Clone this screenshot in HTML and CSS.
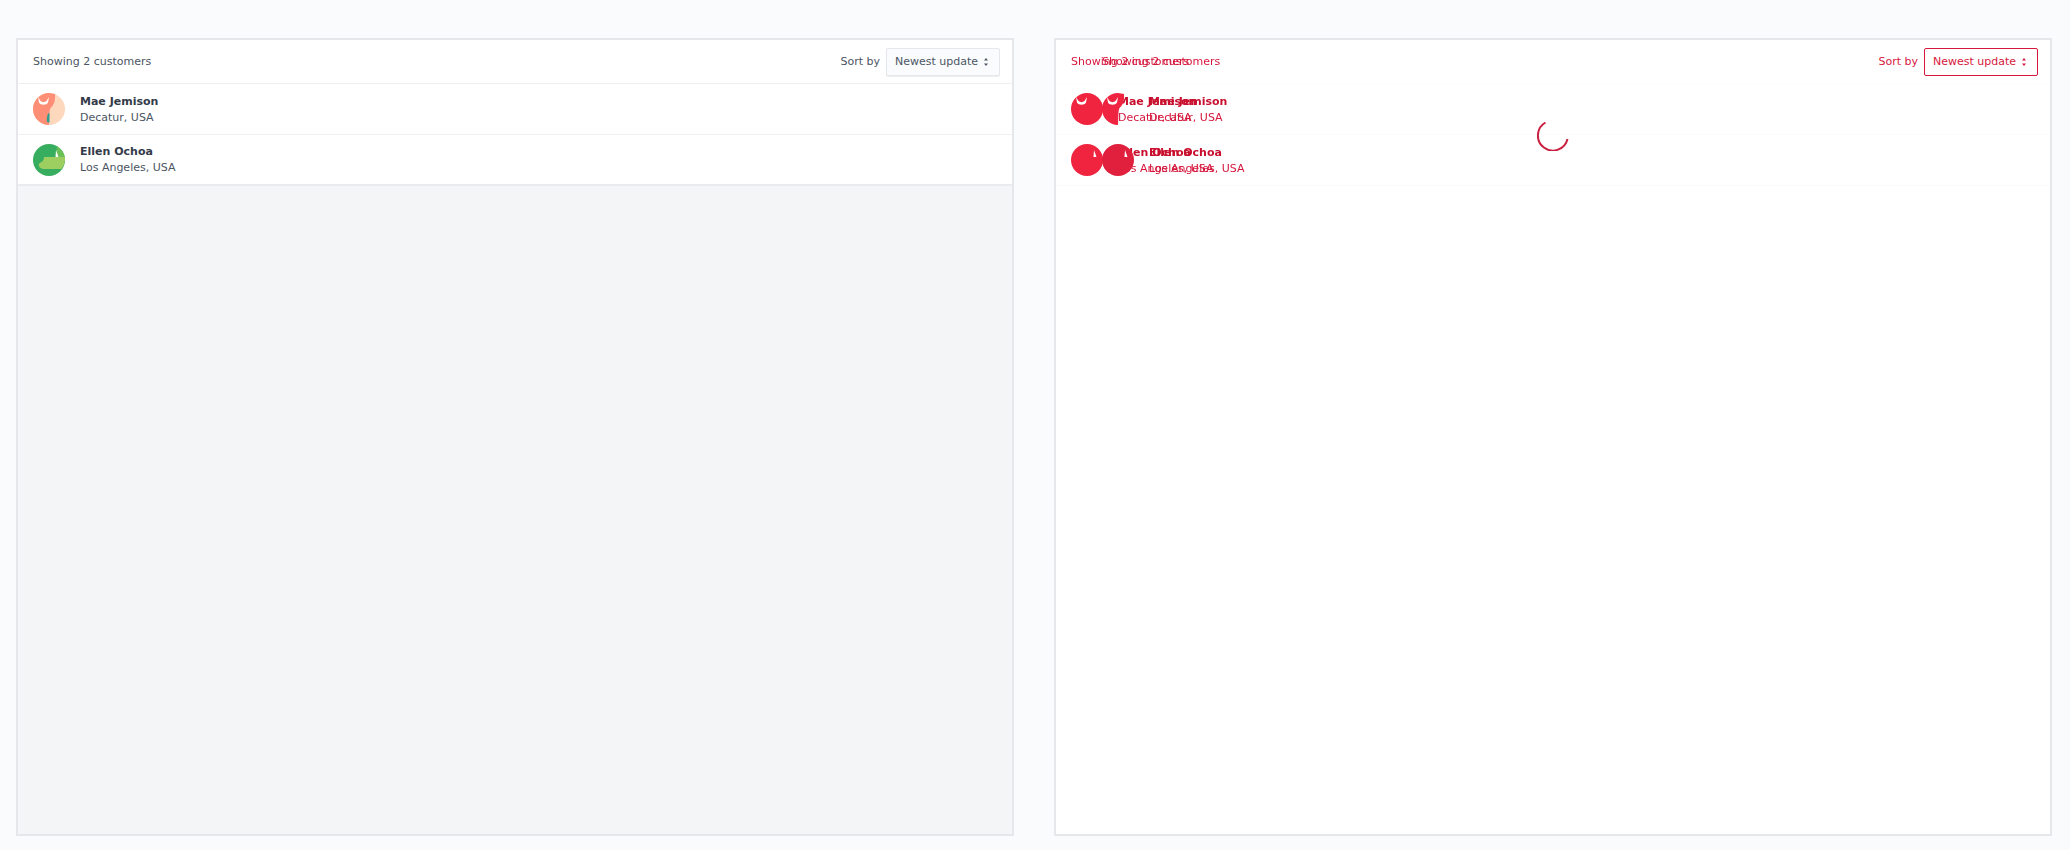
FILE: index.html
```html
<!DOCTYPE html>
<html lang="en">
<head>
<meta charset="utf-8">
<title>Customers</title>
<link rel="stylesheet" href="styles.css">
</head>
<body>
<main class="split">
  <section class="panel panel-gray">
    <header class="bar">
      <span class="count">Showing 2 customers</span>
      <div class="sort">
        <span class="sort-label">Sort by</span>
        <button class="select">Newest update
          <svg class="updown" viewBox="0 0 6 10"><path d="M3 1 5 3.500H1zM3 9 1 6.500H5z"/></svg>
        </button>
      </div>
    </header>
    <ul class="list">
      <li class="row">
        <svg class="avatar" viewBox="0 0 32 32"><circle cx="16" cy="16" r="16" fill="#fdd8bd"/><path d="M16 32A16 16 0 0 1 16 0L22 1C22.500 8 21 12 17.500 15C16 18 16.500 25 16 32Z" fill="#ff8e76"/><path d="M16.500 19.500C14 21 13.500 25 14 29L16.500 29.500Z" fill="#2f9e8f"/><path d="M5 4 7.500 8C9 9.500 12 9.500 13.500 8L16 4 15 9.500C13.500 12.500 7.500 12.500 6 9.500Z" fill="#fff"/></svg>
        <div class="who"><strong class="name">Mae Jemison</strong><span class="place">Decatur, USA</span></div>
      </li>
      <li class="row">
        <svg class="avatar" viewBox="0 0 32 32"><circle cx="16" cy="16" r="16" fill="#37ad5f"/><path d="M24 2.200A16 16 0 0 1 32 14H23Z" fill="#6bbf57"/><path d="M11 13H31.900A16 16 0 0 1 28.500 25H12C8 25 5 23 6 20C7 18 11 18 11 13Z" fill="#9ccf60"/><path d="M22.500 13 23 6 25.500 13Z" fill="#fff"/></svg>
        <div class="who"><strong class="name">Ellen Ochoa</strong><span class="place">Los Angeles, USA</span></div>
      </li>
    </ul>
  </section>

  <section class="panel panel-ghost">
    <header class="bar">
      <span class="count">Showing 2 customers<span class="echo">Showing 2 customers</span></span>
      <div class="sort">
        <span class="sort-label">Sort by</span>
        <button class="select">Newest update
          <svg class="updown" viewBox="0 0 6 10"><path d="M3 1 5 3.500H1zM3 9 1 6.500H5z"/></svg>
        </button>
      </div>
    </header>
    <ul class="list">
      <li class="row">
        <svg class="avatar" viewBox="0 0 32 32"><circle cx="16" cy="16" r="16" fill="#f0243f"/><path d="M5 4 7.500 8C9 9.500 12 9.500 13.500 8L16 4 15 9.500C13.500 12.500 7.500 12.500 6 9.500Z" fill="#fff"/></svg>
        <svg class="avatar echo-avatar" viewBox="0 0 32 32"><path d="M16 32A16 16 0 0 1 16 0L22 1C22.500 8 21 12 17.500 15C16 18 16.500 25 16 32Z" fill="#ee2440"/><path d="M5 4 7.500 8C9 9.500 12 9.500 13.500 8L16 4 15 9.500C13.500 12.500 7.500 12.500 6 9.500Z" fill="#fff"/></svg>
        <div class="who"><strong class="name">Mae Jemison<span class="echo">Mae Jemison</span></strong><span class="place">Decatur, USA<span class="echo">Decatur, USA</span></span></div>
      </li>
      <li class="row">
        <svg class="avatar" viewBox="0 0 32 32"><circle cx="16" cy="16" r="16" fill="#f0243f"/><path d="M22.500 13 23 6 25.500 13Z" fill="#fff"/></svg>
        <svg class="avatar echo-avatar" viewBox="0 0 32 32"><circle cx="16" cy="16" r="16" fill="#e0203d"/><path d="M22.500 13 23 6 25.500 13Z" fill="#fff"/></svg>
        <div class="who"><strong class="name">Ellen Ochoa<span class="echo">Ellen Ochoa</span></strong><span class="place">Los Angeles, USA<span class="echo">Los Angeles, USA</span></span></div>
      </li>
    </ul>
    <svg class="spinner" viewBox="0 0 32 32"><path d="M8.500 3.500A15 15 0 1 0 30.500 20" fill="none" stroke="#c9203f" stroke-width="2"/></svg>
  </section>
</main>
</body>
</html>
```
FILE: styles.css
```css
* { box-sizing: border-box; }
html, body { margin: 0; height: 100%; }
body {
  background: #fafbfd;
  font-family: "DejaVu Sans", sans-serif;
  font-size: 11px;
  color: #4b5563;
}
.split {
  display: grid;
  grid-template-columns: 998px 998px;
  column-gap: 40px;
  padding: 38px 18px 14px 16px;
  height: 850px;
  filter: blur(0.35px);
}
.panel {
  position: relative;
  border: 2px solid #e5e7eb;
  background: #f4f5f7;
}
.panel-ghost { background: #fff; color: #d6173c; }
.bar {
  display: flex;
  align-items: center;
  justify-content: space-between;
  height: 44px;
  padding: 0 12px 0 15px;
  background: #fff;
  border-bottom: 1px solid #edeff2;
}
.panel-ghost .bar { border-bottom-color: #fdfdfd; }
.count { position: relative; white-space: nowrap; }
.sort { display: flex; align-items: center; gap: 6px; }
.select {
  display: flex;
  align-items: center;
  justify-content: space-between;
  width: 114px;
  height: 28px;
  padding: 0 10px 0 8px;
  background: #fafbfd;
  border: 1px solid #e5e7eb;
  border-radius: 2px;
  font: inherit;
  color: inherit;
  white-space: nowrap;
  box-shadow: 0 1px 1px #eceef1;
}
.panel-ghost .select {
  background: #fff;
  border-color: #d6173c;
  box-shadow: none;
}
.updown { width: 6px; height: 10px; fill: currentColor; }
.list { margin: 0; padding: 0; list-style: none; }
.row {
  position: relative;
  display: flex;
  align-items: center;
  gap: 15px;
  height: 51px;
  padding-left: 15px;
  background: #fff;
  border-bottom: 1px solid #eef0f3;
}
.row:last-child { height: 51px; border-bottom: 2px solid #e9ebee; }
.panel-ghost .row { border-bottom-color: #fcfcfc; }
.panel-ghost .row:last-child { border-bottom: 1px solid #fafafa; }
.avatar { display: block; width: 32px; height: 32px; }
.echo-avatar { position: absolute; z-index: 1; left: 46px; top: 9px; }
.who { display: flex; flex-direction: column; gap: 1px; line-height: 15px; }
.name { position: relative; font-weight: 700; color: #343b48; white-space: nowrap; }
.place { position: relative; white-space: nowrap; }
.panel-ghost .name { color: #c8102e; }
.echo { position: absolute; left: 31px; top: 0; }
.spinner {
  position: absolute;
  left: 481px;
  top: 79px;
  width: 32px;
  height: 32px;
}
```
